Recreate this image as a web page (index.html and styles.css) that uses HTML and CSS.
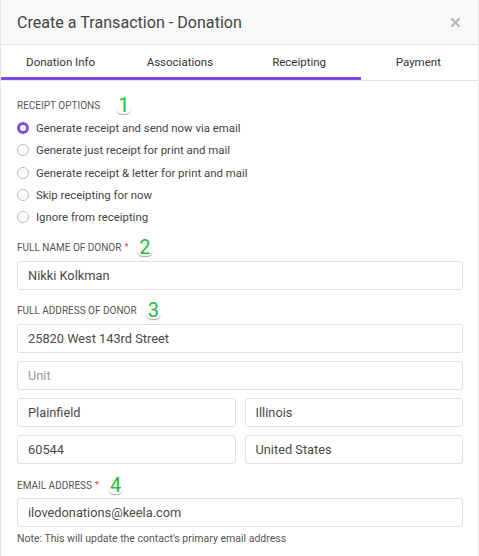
FILE: index.html
```html
<!DOCTYPE html>
<html lang="en">
<head>
<meta charset="utf-8">
<title>Create a Transaction - Donation</title>
<link rel="stylesheet" href="styles.css">
</head>
<body>
<div class="modal">
  <header class="modal-header">
    <h1 class="modal-title">Create a Transaction - Donation</h1>
    <button class="close" aria-label="Close">
      <svg width="9" height="9" viewBox="0 0 9 9"><path d="M1 1L8 8M8 1L1 8" stroke="#b5b5b5" stroke-width="2" stroke-linecap="round"/></svg>
    </button>
  </header>

  <nav class="tabs">
    <div class="tab">Donation Info</div>
    <div class="tab">Associations</div>
    <div class="tab">Receipting</div>
    <div class="tab">Payment</div>
    <div class="tab-progress"></div>
  </nav>

  <main class="content">
    <section class="group">
      <div class="label">Receipt Options <span class="step step-1">1</span></div>
      <ul class="radios">
        <li class="radio checked"><span class="dot"></span>Generate receipt and send now via email</li>
        <li class="radio"><span class="dot"></span>Generate just receipt for print and mail</li>
        <li class="radio"><span class="dot"></span>Generate receipt &amp; letter for print and mail</li>
        <li class="radio"><span class="dot"></span>Skip receipting for now</li>
        <li class="radio"><span class="dot"></span>Ignore from receipting</li>
      </ul>
    </section>

    <section class="group">
      <div class="label">Full Name of Donor <span class="req">*</span> <span class="step">2</span></div>
      <div class="field">Nikki Kolkman</div>
    </section>

    <section class="group group-address">
      <div class="label">Full Address of Donor <span class="step">3</span></div>
      <div class="fields">
        <div class="field">25820 West 143rd Street</div>
        <div class="field placeholder">Unit</div>
        <div class="row">
          <div class="field">Plainfield</div>
          <div class="field">Illinois</div>
        </div>
        <div class="row">
          <div class="field">60544</div>
          <div class="field">United States</div>
        </div>
      </div>
    </section>

    <section class="group">
      <div class="label label-tight">Email Address <span class="req">*</span> <span class="step">4</span></div>
      <div class="field">ilovedonations@keela.com</div>
      <p class="note">Note: This will update the contact's primary email address</p>
    </section>
  </main>
</div>
</body>
</html>
```

FILE: styles.css
```css
* {
  box-sizing: border-box;
}

html, body {
  margin: 0;
  padding: 0;
  background: #ffffff;
}

body {
  font-family: Roboto, "Liberation Sans", Arial, sans-serif;
  color: #444;
}

.modal {
  width: 479px;
  height: 556px;
  border-left: 1px solid #e6e6e6;
  border-right: 1px solid #e6e6e6;
  overflow: hidden;
}

/* header */
.modal-header {
  height: 45px;
  background: #f8f8f8;
  border-bottom: 1px solid #e4e4e4;
  display: flex;
  align-items: center;
  justify-content: space-between;
  padding: 0 16px 0 16px;
}

.modal-title {
  margin: 0;
  font-size: 16.1px;
  font-weight: 400;
  color: #454545;
}

.close {
  border: 0;
  background: none;
  padding: 0;
  width: 14px;
  height: 14px;
  display: flex;
  align-items: center;
  justify-content: center;
  margin-top: 1px;
}

/* tabs */
.tabs {
  position: relative;
  display: grid;
  grid-template-columns: repeat(4, 1fr);
  height: 36px;
  border-bottom: 1px solid #e4e4e4;
}

.tab {
  display: flex;
  align-items: center;
  justify-content: center;
  font-size: 11.5px;
  color: #333;
  padding-bottom: 2px;
}

.tab-progress {
  position: absolute;
  left: -1px;
  bottom: 0;
  width: 361px;
  height: 3px;
  background: #7b4ee0;
}

/* body */
.content {
  padding: 16px 15px 0 16px;
}

.group {
  margin-bottom: 12px;
}

.group-address {
  margin-bottom: 13px;
}

.label {
  font-size: 10px;
  text-transform: uppercase;
  color: #555;
  height: 16px;
  display: flex;
  align-items: center;
  gap: 3px;
  margin-bottom: 6px;
}

.label-tight {
  margin-bottom: 5px;
}

.req {
  color: #e53935;
  font-size: 9px;
}

.step {
  display: inline-block;
  color: #1fbb3c;
  font-size: 20px;
  line-height: 18px;
  padding: 0 2px;
  margin-left: 6px;
  border-radius: 6px;
  background: #fff;
  box-shadow: 0 1.5px 1px -0.5px rgba(0, 0, 0, 0.35);
}

.step-1 {
  margin-left: 13px;
}

/* radios */
.radios {
  list-style: none;
  margin: -2px 0 -1px;
  padding: 0;
  display: flex;
  flex-direction: column;
}

.radio {
  height: 22.25px;
  display: flex;
  align-items: center;
  font-size: 11.4px;
  color: #444;
}

.dot {
  width: 12px;
  height: 12px;
  border-radius: 50%;
  border: 1px solid #b8b8b8;
  margin: 0 7px 0 0;
  flex-shrink: 0;
}

.radio.checked .dot {
  border: 3px solid #7b4ee0;
  background: #fff;
}

/* inputs */
.fields {
  display: flex;
  flex-direction: column;
  gap: 8px;
}

.row {
  display: grid;
  grid-template-columns: 1fr 1fr;
  gap: 9px;
}

.field {
  height: 29px;
  border: 1px solid #e0e0e0;
  border-radius: 3px;
  display: flex;
  align-items: center;
  padding: 0 10px;
  font-size: 12.8px;
  color: #4a4a4a;
  background: #fff;
}

.field.placeholder {
  color: #9a9a9a;
}

.note {
  margin: 5px 0 0;
  font-size: 10.5px;
  color: #555;
}
```
